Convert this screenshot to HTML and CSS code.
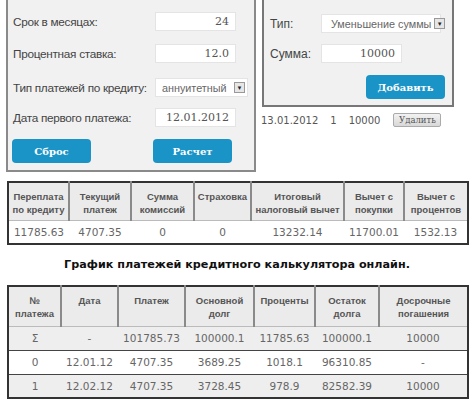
FILE: index.html
```html
<!DOCTYPE html>
<html lang="ru">
<head>
    <meta charset="UTF-8">
    <title>Кредитный калькулятор</title>
    <link rel="stylesheet" href="styles.css">
</head>
<body>
    <div class="top">
        <div class="calc">
            <div class="row">
                <span class="lbl">Срок в месяцах:</span>
                <div class="inp">24</div>
            </div>
            <div class="row r2">
                <span class="lbl">Процентная ставка:</span>
                <div class="inp">12.0</div>
            </div>
            <div class="row r3">
                <span class="lbl">Тип платежей по кредиту:</span>
                <div class="sel sel-type">аннуитетный <span class="arrow">▼</span></div>
            </div>
            <div class="row r4">
                <span class="lbl">Дата первого платежа:</span>
                <div class="inp">12.01.2012</div>
            </div>
            <div class="buttons">
                <button class="btn">Сброс</button>
                <button class="btn">Расчет</button>
            </div>
        </div>

        <div class="side">
            <div class="early">
                <div class="erow">
                    <span class="elbl">Тип:</span>
                    <div class="sel sel-early">Уменьшение суммы <span class="arrow">▼</span></div>
                </div>
                <div class="erow e2">
                    <span class="elbl">Сумма:</span>
                    <div class="inp inp-sum">10000</div>
                </div>
                <div class="add-row">
                    <button class="btn">Добавить</button>
                </div>
            </div>
            <div class="early-item">
                <span>13.01.2012</span>
                <span>1</span>
                <span>10000</span>
                <button class="del">Удалить</button>
            </div>
        </div>
    </div>

    <table class="grid summary">
        <tr>
            <th>Переплата по кредиту</th>
            <th>Текущий платеж</th>
            <th>Сумма комиссий</th>
            <th>Страховка</th>
            <th>Итоговый налоговый вычет</th>
            <th>Вычет с покупки</th>
            <th>Вычет с процентов</th>
        </tr>
        <tr>
            <td>11785.63</td>
            <td>4707.35</td>
            <td>0</td>
            <td>0</td>
            <td>13232.14</td>
            <td>11700.01</td>
            <td>1532.13</td>
        </tr>
    </table>

    <h2 class="title">График платежей кредитного калькулятора онлайн.</h2>

    <table class="grid schedule">
        <tr>
            <th>№ платежа</th>
            <th>Дата</th>
            <th>Платеж</th>
            <th>Основной долг</th>
            <th>Проценты</th>
            <th>Остаток долга</th>
            <th>Досрочные погашения</th>
        </tr>
        <tr class="odd">
            <td>Σ</td>
            <td>-</td>
            <td>101785.73</td>
            <td>100000.1</td>
            <td>11785.63</td>
            <td>100000.1</td>
            <td>10000</td>
        </tr>
        <tr>
            <td>0</td>
            <td>12.01.12</td>
            <td>4707.35</td>
            <td>3689.25</td>
            <td>1018.1</td>
            <td>96310.85</td>
            <td>-</td>
        </tr>
        <tr class="odd">
            <td>1</td>
            <td>12.02.12</td>
            <td>4707.35</td>
            <td>3728.45</td>
            <td>978.9</td>
            <td>82582.39</td>
            <td>10000</td>
        </tr>
    </table>
</body>
</html>
```

FILE: styles.css
```css
* {
    margin: 0;
    padding: 0;
    box-sizing: border-box;
}

body {
    font-family: 'Liberation Sans', Arial, sans-serif;
    background: #fff;
    color: #444;
    width: 474px;
    overflow: hidden;
}

.top {
    display: flex;
    align-items: flex-start;
    margin-top: -6px;
    padding-left: 6px;
}

/* левая панель калькулятора */
.calc {
    width: 250px;
    background: #f1f1f1;
    border: 2px solid #8a8a8a;
    padding: 16px 0 7px 5px;
}

.row {
    display: flex;
    justify-content: space-between;
    align-items: center;
    height: 19px;
}

.r2 { margin-top: 13px; }
.r3 { margin-top: 15px; }
.r4 { margin-top: 11px; }

.lbl {
    font-size: 11.8px;
    letter-spacing: -0.3px;
    color: #444;
    white-space: nowrap;
}

.inp {
    width: 81px;
    height: 19px;
    background: #fff;
    border: 1px solid #e4e4e4;
    font-family: 'DejaVu Serif', Georgia, serif;
    font-size: 11px;
    color: #555;
    text-align: right;
    padding: 2px 6px 0 0;
    margin-right: 18px;
}

.sel {
    height: 19px;
    background: #fff;
    border: 1px solid #e4e4e4;
    font-size: 10.8px;
    color: #666;
    white-space: nowrap;
    display: flex;
    align-items: center;
    justify-content: space-between;
    padding: 0 2px 0 6px;
}

.sel-type {
    width: 93px;
    margin-right: 6px;
}

.arrow {
    flex: none;
    width: 11px;
    height: 11px;
    margin-left: 3px;
    border: 1px solid #999;
    background: #e6e6e6;
    font-size: 6px;
    color: #222;
    display: flex;
    align-items: center;
    justify-content: center;
}

.buttons {
    display: flex;
    gap: 62px;
    margin-top: 12px;
    margin-left: -1px;
}

.btn {
    width: 79px;
    height: 24px;
    background: #1a93c6;
    border: none;
    border-radius: 4px;
    color: #fff;
    font-family: 'DejaVu Serif', Georgia, serif;
    font-weight: bold;
    font-size: 10px;
}

/* правая колонка */
.side {
    margin-left: 6px;
    width: 192px;
}

.early {
    background: #f1f1f1;
    border: 2px solid #777;
    padding: 18px 0 6px 6px;
}

.erow {
    display: flex;
    align-items: center;
    height: 19px;
}

.e2 { margin-top: 11px; }

.elbl {
    width: 51px;
    font-size: 12px;
    color: #444;
}

.sel-early {
    width: 120px;
    padding-left: 9px;
}

.inp-sum {
    margin-right: 0;
}

.add-row {
    display: flex;
    justify-content: flex-end;
    margin-top: 12px;
    padding-right: 7px;
}

.early-item {
    display: flex;
    align-items: center;
    margin: 6px 0 0 -1px;
    font-family: 'DejaVu Sans', Verdana, sans-serif;
    font-size: 10px;
    color: #555;
}

.early-item span {
    margin-right: 12px;
}

.del {
    margin-left: 1px;
    width: 48px;
    height: 14px;
    background: linear-gradient(#f2f2f2, #d8d8d8);
    border: 1px solid #aaa;
    border-radius: 2px;
    font-family: 'DejaVu Serif', Georgia, serif;
    font-size: 8.5px;
    color: #555;
}

/* таблицы */
.grid {
    width: 462px;
    margin-left: 7px;
    border-collapse: collapse;
    table-layout: fixed;
    border: 2px solid #333;
}

.summary {
    margin-top: 9px;
}

.grid th {
    background: #ebebeb;
    font-size: 9.5px;
    font-weight: bold;
    color: #555;
    line-height: 13px;
    border-right: 2px solid #8a8a8a;
    border-bottom: 1px solid #bbb;
    text-align: center;
    vertical-align: top;
    padding: 7px 1px 0;
}

.grid th:last-child {
    border-right: none;
}

.grid td {
    font-family: 'DejaVu Sans', Verdana, sans-serif;
    font-size: 10.5px;
    color: #666;
    text-align: center;
    height: 24px;
}

.summary th { height: 38px; }

.summary th:nth-child(1) { width: 61px; }
.summary th:nth-child(2) { width: 62px; }
.summary th:nth-child(3) { width: 63px; }
.summary th:nth-child(4) { width: 57px; }
.summary th:nth-child(5) { width: 93px; }
.summary th:nth-child(6) { width: 60px; }

.title {
    font-family: 'DejaVu Sans', Verdana, sans-serif;
    font-size: 11.2px;
    font-weight: bold;
    color: #111;
    text-align: center;
    margin: 12px 0 12px;
    line-height: 16px;
}

.schedule th { height: 40px; }

.schedule th:nth-child(1) { width: 53px; }
.schedule th:nth-child(2) { width: 57px; }
.schedule th:nth-child(3) { width: 67px; }
.schedule th:nth-child(4) { width: 69px; }
.schedule th:nth-child(5) { width: 61px; }
.schedule th:nth-child(6) { width: 64px; }

.schedule td {
    border-top: 1px solid #444;
}

.schedule tr.odd td {
    background: #eeeeee;
}
```
